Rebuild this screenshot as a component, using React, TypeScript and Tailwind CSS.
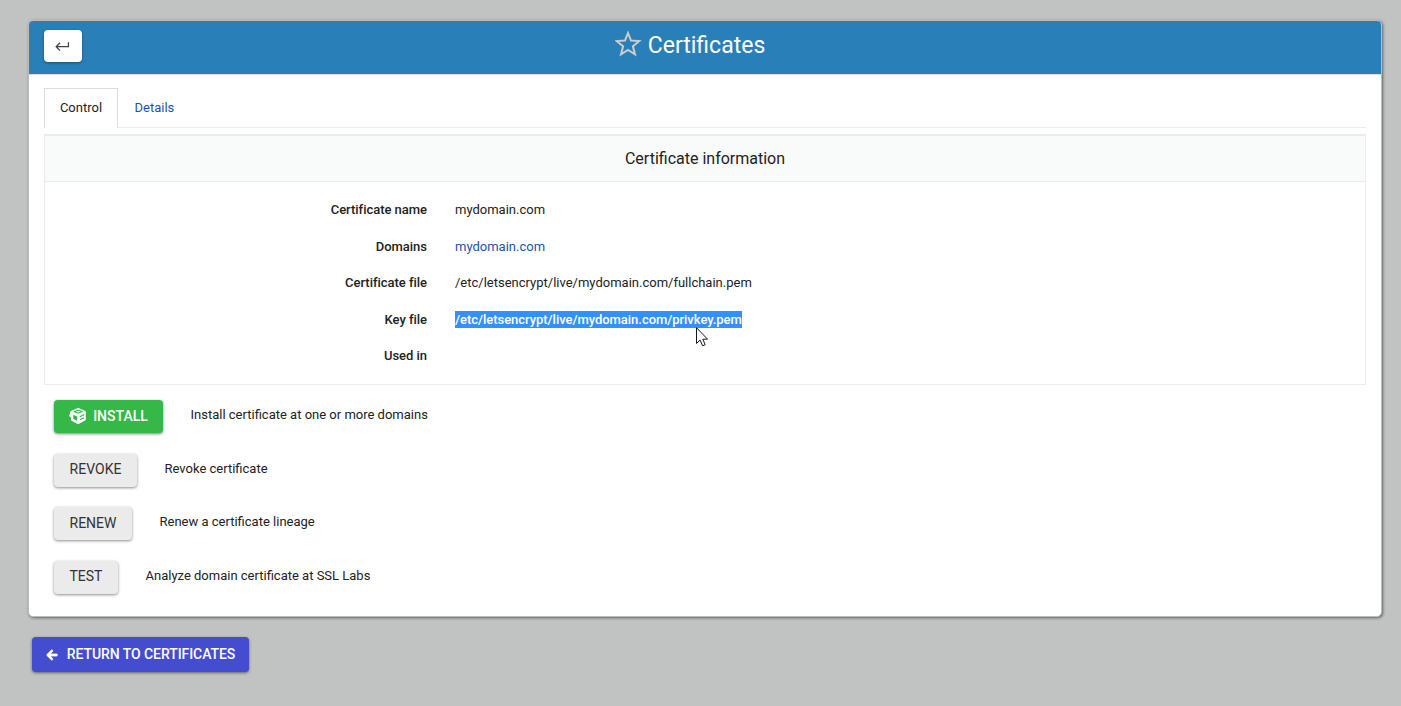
import { FaArrowLeft } from "react-icons/fa";

const rows = [
  { label: "Certificate name", value: "mydomain.com", className: "text-[#222]" },
  { label: "Domains", value: "mydomain.com", className: "text-[#1a55a8]" },
  { label: "Certificate file", value: "/etc/letsencrypt/live/mydomain.com/fullchain.pem", className: "text-[#222]" },
  {
    label: "Key file",
    value: "/etc/letsencrypt/live/mydomain.com/privkey.pem",
    className: "bg-[#3390ff] py-px font-medium tracking-[-0.04px] text-white",
  },
  { label: "Used in", value: "", className: "" },
];

const actions = [
  { label: "Revoke", text: "Revoke certificate", width: "w-[83px]" },
  { label: "Renew", text: "Renew a certificate lineage", width: "w-[78px]" },
  { label: "Test", text: "Analyze domain certificate at SSL Labs", width: "w-[64px]" },
];

const BackIcon = () => (
  <svg className="mr-[2px] h-4 w-4" viewBox="0 0 16 16" fill="none" stroke="#444" strokeWidth="1.3">
    <path d="M14.4 4.2v4.5H2.4M6 4.8 2.2 8.7 6 12.6" />
  </svg>
);

const StarIcon = () => (
  <svg className="-mt-[5px] h-[27px] w-[27px]" viewBox="0 0 27 27" fill="none" stroke="#ccc" strokeWidth="2">
    <path d="M13 3 16 10.6 24.2 11.1 17.9 16.3 20 24.4 13 19.9 6 24.4 8.1 16.3 1.8 11.1 10 10.6Z" />
  </svg>
);

const PackageIcon = () => (
  <svg className="h-[18px] w-[18px]" viewBox="0 0 18 18">
    <path fill="#fff" d="M9.2.7 16.8 4.2v8.9L9.2 17.3 2 13.4v-3L.2 9.2 1.5 4.2Z" />
    <path fill="#35b848" d="M4.2 7.8 8 9.6v4.2L4.2 12Z" />
    <path
      fill="none"
      stroke="#35b848"
      strokeWidth="1.1"
      d="M5.4 4.7 9.2 3.1 13 4.6 9.2 6.2ZM10.8 9.7 15.1 7.6M11 12.8l4.1-2.1"
    />
  </svg>
);

const Cursor = () => (
  <svg className="absolute top-[16px] left-[241px] h-5 w-3" viewBox="0 0 12 20">
    <path d="M.5.7v15.8l3.6-3.4 2.5 5.7 2.6-1.1-2.4-5.5h4.7Z" fill="#fff" stroke="#111827" strokeWidth="1" />
  </svg>
);

export default function App() {
  return (
    <div className="h-[706px] overflow-hidden bg-[#c1c3c2] px-7 pt-[20px] font-[Roboto,sans-serif] text-[13px] leading-[18px] text-[#222]">
      <div className="h-[597px] w-[1354px] overflow-hidden rounded-[5px] border border-[#bbb] bg-white shadow-[1px_1px_3px_rgba(0,0,0,0.5)]">
        <header className="grid h-[54px] grid-cols-[1fr_auto_1fr] border-b border-[#ddd] bg-[#2980b9] pr-[45px] pl-[15px] pt-[9px]">
          <button className="flex h-8 w-[38px] items-center justify-center rounded bg-white shadow-[0_1px_3px_rgba(0,0,0,0.4)]">
            <BackIcon />
          </button>
          <h1 className="flex h-8 items-center gap-[6px] text-[23px] leading-8 text-white">
            <StarIcon />
            Certificates
          </h1>
        </header>

        <div className="px-[15px] pt-[13px]">
          <nav className="flex h-10 border-b border-[#ececec]">
            <a className="h-10 w-[74px] border border-b-0 border-[#ddd] bg-white pt-[10px] text-center">Control</a>
            <a className="pt-[11px] pl-[16.5px] text-[#1a55a8]">Details</a>
          </nav>

          <section className="mt-[6px] h-[251px] border border-t-2 border-[#ececec]">
            <h2 className="flex h-[46px] items-center justify-center border-b border-[#ececec] bg-[#f9fbfa] text-[16px]">
              Certificate information
            </h2>
            <dl className="pt-[10px]">
              {rows.map((row) => (
                <div key={row.label} className="flex h-[36.5px] items-center">
                  <dt className="w-[382px] text-right font-medium tracking-[-0.03px]">{row.label}</dt>
                  <dd className="relative ml-7">
                    <span className={row.className}>{row.value}</span>
                    {row.label === "Key file" && <Cursor />}
                  </dd>
                </div>
              ))}
            </dl>
          </section>

          <div className="pt-[15px] pl-[10px]">
            <div className="flex h-[53.5px]">
              <button className="flex h-[33px] w-[109px] items-center justify-center gap-[6px] rounded bg-[#35b848] pb-px text-[14px] font-medium text-white shadow-[0_1px_3px_rgba(0,0,0,0.5)]">
                <PackageIcon />
                <span>INSTALL</span>
              </button>
              <span className="pt-[6px] pl-[27.5px]">Install certificate at one or more domains</span>
            </div>
            {actions.map((action) => (
              <div key={action.label} className="flex h-[53.5px]">
                <button
                  className={`${action.width} h-[33px] rounded bg-[#ebebeb] pb-[2px] text-[14px] text-[#333] uppercase shadow-[0_1px_3px_rgba(0,0,0,0.45)]`}
                >
                  {action.label}
                </button>
                <span className="pt-[6px] pl-[27.5px]">{action.text}</span>
              </div>
            ))}
          </div>
        </div>
      </div>

      <button className="mt-5 ml-1 flex h-[35px] w-[217px] items-center justify-center gap-[9px] rounded bg-[#444dd0] pb-px text-[14px] font-medium tracking-[-0.07px] text-white shadow-[0_1px_3px_rgba(0,0,0,0.5)]">
        <FaArrowLeft className="mt-[2px] h-3 w-3 stroke-current stroke-[40]" />
        RETURN TO CERTIFICATES
      </button>
    </div>
  );
}
